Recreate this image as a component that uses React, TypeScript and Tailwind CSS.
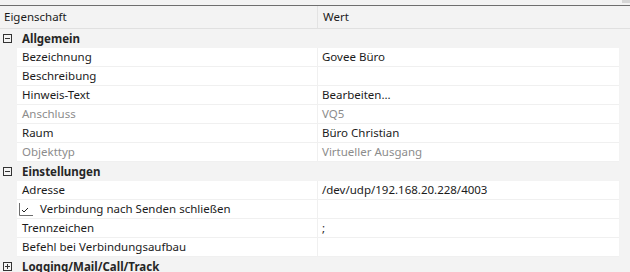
import React from 'react';

type Row = {
  label: string;
  value?: string;
  disabled?: boolean;
  checkbox?: boolean;
};

type Category = {
  title: string;
  expanded: boolean;
  rows: Row[];
};

const categories: Category[] = [
  {
    title: 'Allgemein',
    expanded: true,
    rows: [
      { label: 'Bezeichnung', value: 'Govee Büro' },
      { label: 'Beschreibung', value: '' },
      { label: 'Hinweis-Text', value: 'Bearbeiten...' },
      { label: 'Anschluss', value: 'VQ5', disabled: true },
      { label: 'Raum', value: 'Büro Christian' },
      { label: 'Objekttyp', value: 'Virtueller Ausgang', disabled: true },
    ],
  },
  {
    title: 'Einstellungen',
    expanded: true,
    rows: [
      { label: 'Adresse', value: '/dev/udp/192.168.20.228/4003' },
      { label: 'Verbindung nach Senden schließen', checkbox: true },
      { label: 'Trennzeichen', value: ';' },
      { label: 'Befehl bei Verbindungsaufbau', value: '' },
    ],
  },
  { title: 'Logging/Mail/Call/Track', expanded: false, rows: [] },
];

const Expander = ({ expanded }: { expanded: boolean }) => (
  <svg width="9" height="9" viewBox="0 0 9 9" className="shrink-0">
    <rect x="0.5" y="0.5" width="8" height="8" fill="none" stroke="#333" />
    <line x1="2" y1="4.5" x2="7" y2="4.5" stroke="#333" />
    {!expanded && <line x1="4.5" y1="2" x2="4.5" y2="7" stroke="#333" />}
  </svg>
);

const CheckBox = () => (
  <svg width="14" height="13" viewBox="0 0 14 13" className="shrink-0">
    <path d="M0.5 0 V12.5 H14" fill="none" stroke="#6d6d6d" />
    <path d="M3 7 L5 9 L9 5" fill="none" stroke="#222" />
  </svg>
);

const PropertyRow = ({ row }: { row: Row }) => {
  const color = row.disabled ? 'text-[#8c8c8c]' : 'text-[#1b1b1b]';
  return (
    <div className="flex h-[19px] pl-[17px] pr-[11px]">
      <div className="flex flex-1 bg-white border-b border-[#f0f0f0]">
        {row.checkbox ? (
          <div className="w-[301px] flex items-center pl-[2px] gap-[7px] border-r border-[#f0f0f0] text-[#1b1b1b]">
            <CheckBox />
            <span className="whitespace-nowrap">{row.label}</span>
          </div>
        ) : (
          <div className={`w-[301px] pl-[5px] leading-[18px] border-r border-[#f0f0f0] whitespace-nowrap ${color}`}>
            {row.label}
          </div>
        )}
        <div className={`flex-1 pl-[4px] leading-[18px] whitespace-nowrap ${color}`}>{row.value}</div>
      </div>
    </div>
  );
};

export default function App() {
  return (
    <div
      className="w-[630px] h-[272px] overflow-hidden bg-[#f3f3f3] text-[11.5px]"
      style={{ fontFamily: '"Noto Sans", sans-serif' }}
    >
      <div className="relative h-[5px]">
        <div className="absolute right-0 top-0 w-[8px] h-[3px] bg-[#d6d6d6]" />
      </div>
      <div className="h-[1px] bg-[#6e6e6e]" />
      <div className="flex h-[23px] border-b border-[#e0e0e0] text-[#1b1b1b]">
        <div className="w-[318px] pl-[4px] leading-[22px] border-r border-[#e3e3e3]">Eigenschaft</div>
        <div className="flex-1 pl-[5px] leading-[22px]">Wert</div>
      </div>
      {categories.map((cat) => (
        <div key={cat.title}>
          <div className="flex items-center h-[19px] pl-[3px] gap-[10px]">
            <Expander expanded={cat.expanded} />
            <span className="font-bold text-[#262626]">{cat.title}</span>
          </div>
          {cat.expanded && cat.rows.map((row) => <PropertyRow key={row.label} row={row} />)}
        </div>
      ))}
    </div>
  );
}
